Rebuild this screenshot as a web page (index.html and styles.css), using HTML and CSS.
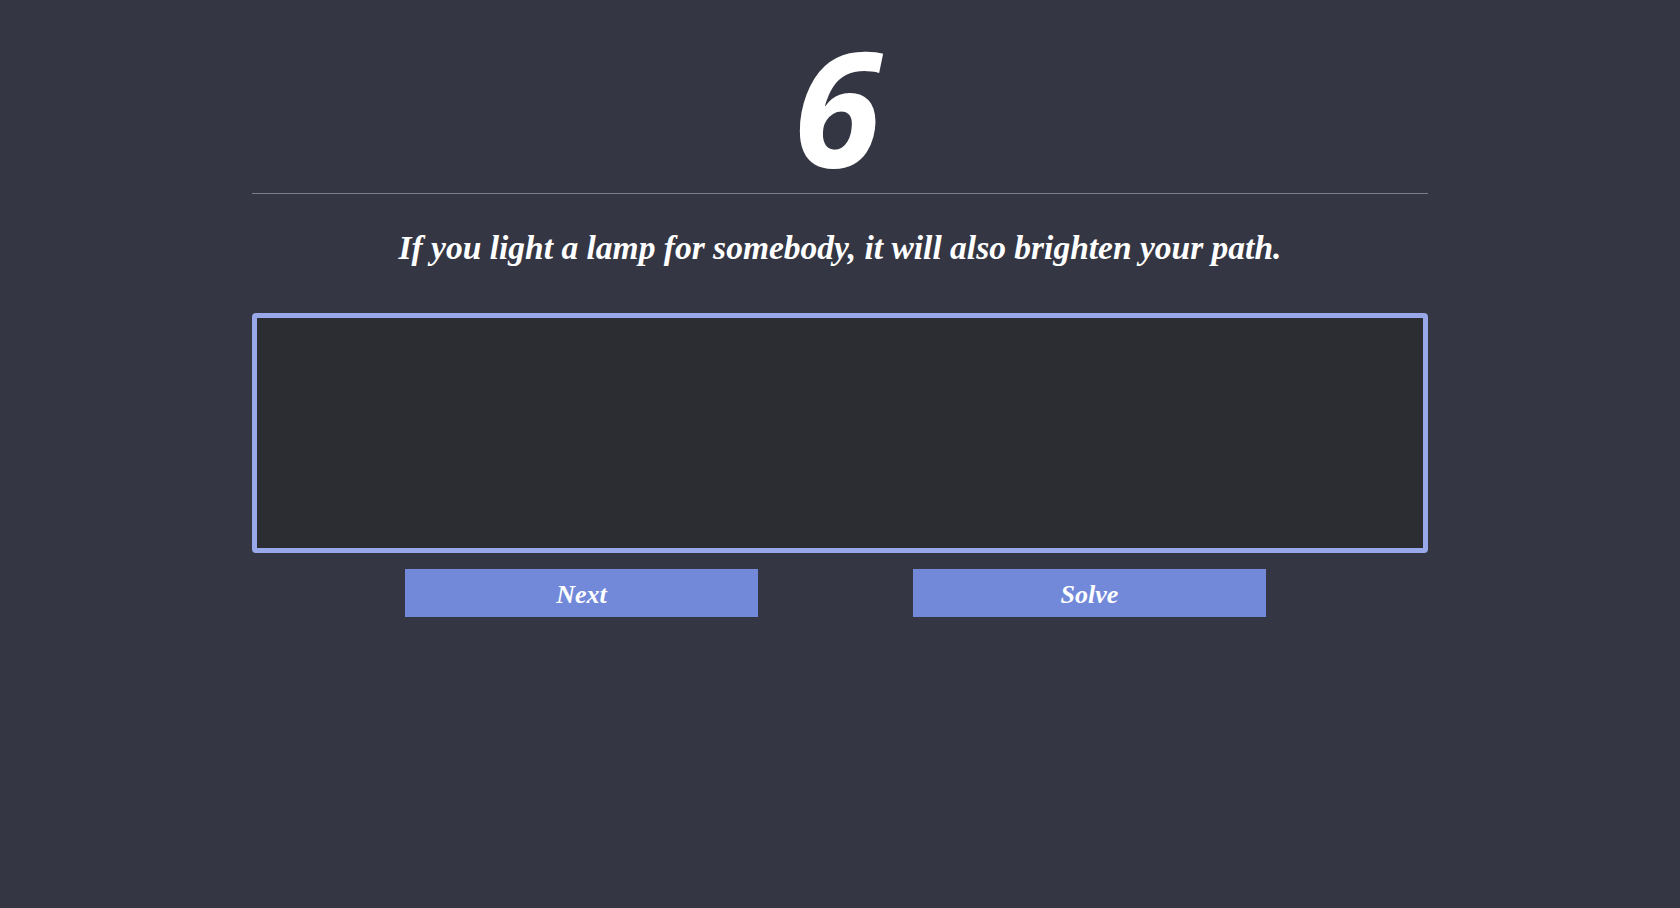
FILE: index.html
```html
<!DOCTYPE html>
<html lang="en">
<head>
<meta charset="utf-8">
<title>Quote typing</title>
<link rel="stylesheet" href="styles.css">
</head>
<body>
<main class="page">
  <h1 class="counter">6</h1>
  <hr class="rule">
  <p class="quote">If you light a lamp for somebody, it will also brighten your path.</p>
  <textarea class="entry"></textarea>
  <div class="actions">
    <button class="btn">Next</button>
    <button class="btn">Solve</button>
  </div>
</main>
</body>
</html>
```
FILE: styles.css
```css
html, body {
  margin: 0;
  padding: 0;
  background: #343643;
  height: 100%;
}
.page {
  width: 1176px;
  margin: 0 auto;
  display: flex;
  flex-direction: column;
  align-items: stretch;
  padding-top: 15px;
}
.counter {
  margin: 0;
  padding: 0 6px 0 0;
  font-family: "Open Sans", sans-serif;
  font-weight: 700;
  font-style: italic;
  font-size: 160px;
  line-height: 180px;
  color: #ffffff;
  text-align: center;
}
.rule {
  margin: -2px 0 0;
  border: 0;
  height: 1px;
  background: #7d7e85;
}
.quote {
  margin: 34px 0 0;
  font-family: "Liberation Serif", serif;
  font-weight: 700;
  font-style: italic;
  font-size: 33.5px;
  line-height: 40px;
  color: #ffffff;
  text-align: center;
}
.entry {
  margin-top: 45px;
  box-sizing: border-box;
  height: 240px;
  width: 100%;
  background: #2c2d33;
  border: 5px solid #98a8e8;
  border-radius: 4px;
  resize: none;
  outline: none;
  color: #ffffff;
  font-family: "Liberation Serif", serif;
  font-size: 20px;
}
.actions {
  display: flex;
  justify-content: center;
  gap: 155px;
  margin-top: 16px;
  padding-right: 9px;
}
.btn {
  width: 353px;
  height: 48px;
  border: 0;
  background: #7289d9;
  color: #ffffff;
  font-family: "Liberation Serif", serif;
  font-weight: 700;
  font-style: italic;
  font-size: 26px;
  padding: 3px 0 0;
}
```
